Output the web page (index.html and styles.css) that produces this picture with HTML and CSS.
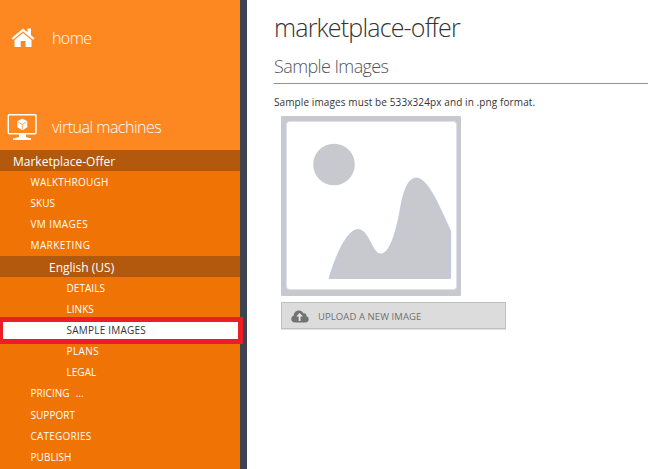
FILE: index.html
```html
<!DOCTYPE html>
<html lang="en">
<head>
<meta charset="utf-8">
<title>marketplace-offer</title>
<link rel="stylesheet" href="styles.css">
</head>
<body>
<div class="app">
  <nav class="sidebar">
    <a class="top-link home">
      <svg class="icon" width="24" height="20" viewBox="0 0 24 20" fill="#fff"><path d="M12 0.5 0.5 10.2 2 11.8 12 3.5 22 11.8 23.5 10.2 20 7.2V.5h-3.5v3.8z"/><path d="M12 4.900 3.500 12v7h6.200v-6h4.800v6H20.500v-7z"/></svg>
      <span>home</span>
    </a>
    <a class="top-link machines">
      <svg class="icon" width="30" height="28" viewBox="0 0 30 28"><rect x="1.3" y="1.800" width="27.700" height="19" rx="1" fill="none" stroke="#fff" stroke-width="1.5"/><path d="M12 20.800h7V24l5 1.500V27H6v-1.500l6-1.500z" fill="#fff"/><path d="m15.300 5.500 5 2.800v6l-5 2.900-5-2.900v-6z" fill="#fff"/><path d="m11 9 4.300 2.400L19.600 9M15.300 11.400v5" fill="none" stroke="#fd8721" stroke-width=".7"/></svg>
      <span>virtual machines</span>
    </a>
    <div class="tree">
      <a class="group">Marketplace-Offer</a>
      <a class="item wide">WALKTHROUGH</a>
      <a class="item">SKUS</a>
      <a class="item wider">VM IMAGES</a>
      <a class="item wider">MARKETING</a>
      <a class="group language">English (US)</a>
      <a class="item deep">DETAILS</a>
      <a class="item deep">LINKS</a>
      <a class="item deep wide selected"><span>SAMPLE IMAGES</span></a>
      <a class="item deep wider">PLANS</a>
      <a class="item deep">LEGAL</a>
      <a class="item high">PRICING <span class="dots">...</span></a>
      <a class="item low">SUPPORT</a>
      <a class="item high wide">CATEGORIES</a>
      <a class="item">PUBLISH</a>
    </div>
  </nav>
  <main class="content">
    <h1>marketplace-offer</h1>
    <h2>Sample Images</h2>
    <p>Sample images must be 533x324px and in .png format.</p>
    <svg class="placeholder" width="180" height="180" viewBox="0 0 180 180"><rect width="180" height="180" rx="1" fill="#c8c9cf"/><rect x="5.500" y="5.500" width="170" height="168" rx="3" fill="#fff" stroke="#dfe0e8"/><circle cx="53" cy="48.500" r="20.800" fill="#c8c9cf"/><path d="M48 162.500C53 145 65 113.500 77 113.500C88 113.500 91 138 99.500 138C109 138 115 116 119 95C122 76 127 62 135 62C147 62 158 90 169.700 115V162.500z" fill="#c8c9cf" stroke="#b9c4df" stroke-width=".8"/></svg>
    <button class="upload">
      <svg width="18" height="13" viewBox="0 0 18 13"><path d="M4 12.500C1.600 12.500.3 11 .3 9c0-1.700 1-3 2.500-3.400C2.800 2.500 5 .4 7.800.4c2.300 0 3.900 1.200 4.700 3 1.900-.3 3.200 1 3 2.800 1.400.4 2.200 1.500 2.200 3 0 2-1.400 3.300-3.400 3.300z" fill="#737373"/><path d="m8.600 3.100 3.300 3.400H9.500V11H7.700V6.500H5.300z" fill="#e8e8e8"/></svg>
      <span>UPLOAD A NEW IMAGE</span>
    </button>
  </main>
</div>
</body>
</html>
```
FILE: styles.css
```css
* { box-sizing: border-box; }
body { margin: 0; background: #fff; font-family: "Open Sans", "Noto Sans", sans-serif; }
.app { display: flex; width: 648px; height: 469px; overflow: hidden; }
.sidebar { width: 247px; flex: none; border-right: 7px solid #3e444f; background: #fd8721; color: #fff; }
.top-link { display: flex; align-items: center; font-size: 16px; font-weight: 300; letter-spacing: -0.5px; white-space: nowrap; }
.home { height: 76px; padding-left: 11px; letter-spacing: -0.6px; }
.home span { margin-left: 17px; }
.machines { height: 74px; padding: 28px 0 0 7px; }
.machines span { margin-left: 15px; }
.tree { height: 319px; background: #f07305; }
.group { display: flex; align-items: center; height: 21px; padding: 1px 0 0 13px; background: #b3590d; font-size: 12px; }
.language { padding-left: 49px; }
.item { display: flex; align-items: center; height: 21.25px; padding-left: 30.5px; font-size: 10px; letter-spacing: 0.04px; white-space: nowrap; }
.wide { letter-spacing: 0.22px; }
.wider { letter-spacing: 0.4px; }
.low { padding-top: 1px; }
.high { padding-bottom: 1px; }
.deep { padding-left: 66.5px; }
.dots { margin-left: 6px; }
.selected { position: relative; width: 243px; height: 27px; margin: -3px 0 -3px; padding-left: 63.5px; background: #fff; border: 5px solid #ee1c25; border-left-width: 3px; color: #333; }
.content { flex: 1; padding: 10px 0 0 27px; color: #333; }
h1, h2, p { margin: 0; font-weight: 300; white-space: nowrap; }
h1 { height: 35px; line-height: 35px; font-size: 25px; letter-spacing: -0.82px; }
h2 { height: 39px; line-height: 43px; border-bottom: 1px solid #e87e24; font-size: 18px; letter-spacing: -0.6px; color: #555; }
p { height: 32px; line-height: 36px; font-size: 10px; font-weight: 400; letter-spacing: 0.1px; }
.placeholder { display: block; margin-left: 7px; }
.upload { display: flex; align-items: center; width: 225px; height: 27px; margin: 6px 0 0 7px; padding: 1px 9px 0; border: 1px solid #bfbfbf; box-shadow: 0 1px 0 #e2e2e2; background: #dcdcdc; color: #707070; font: 9.5px "Open Sans", "Noto Sans", sans-serif; letter-spacing: 0.08px; }
.upload span { margin-left: 9px; }
```
